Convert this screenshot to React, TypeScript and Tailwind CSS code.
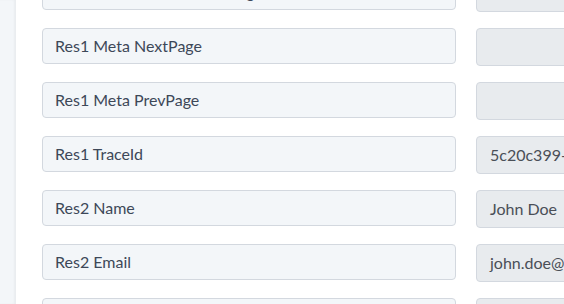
import React from 'react';

const rows = [
  { label: 'Res1 Meta TotalItemsPerPage', value: '' },
  { label: 'Res1 Meta NextPage', value: '' },
  { label: 'Res1 Meta PrevPage', value: '' },
  { label: 'Res1 TraceId', value: '5c20c399-4d7b-4e1c-9a4f-2b7e8d3c1f00' },
  { label: 'Res2 Name', value: 'John Doe' },
  { label: 'Res2 Email', value: 'john.doe@example.com' },
  { label: 'Res2 Phone', value: '' },
];

export default function App() {
  return (
    <div className="flex h-[304px] w-[564px] overflow-hidden bg-white">
      <aside className="w-[16px] shrink-0 bg-[#f3f6f9] shadow-[inset_-2px_0_2px_rgba(0,0,0,0.04)]" />
      <main className="flex-1 overflow-hidden pl-[26px]">
        <div className="-mt-[26px] flex flex-col gap-[16px]">
          {rows.map((row) => (
            <div key={row.label} className="flex items-start gap-[20px]">
              <div
                className="flex h-[36px] w-[414px] shrink-0 items-center rounded-[4px] border border-[#d3d8df] bg-[#f3f6f9] px-[12px] pb-[1px] text-[16px] text-[#3d4858]"
                style={{ fontFamily: 'Lato, "Open Sans", sans-serif' }}
              >
                {row.label}
              </div>
              <div
                className="flex h-[38px] w-[200px] shrink-0 items-center overflow-hidden whitespace-nowrap rounded-[4px] border border-[#d3d8df] bg-[#e8ebee] px-[13px] pb-[1px] text-[16px] text-[#4a4f57]"
                style={{ fontFamily: 'Lato, "Open Sans", sans-serif' }}
              >
                {row.value}
              </div>
            </div>
          ))}
        </div>
      </main>
    </div>
  );
}
